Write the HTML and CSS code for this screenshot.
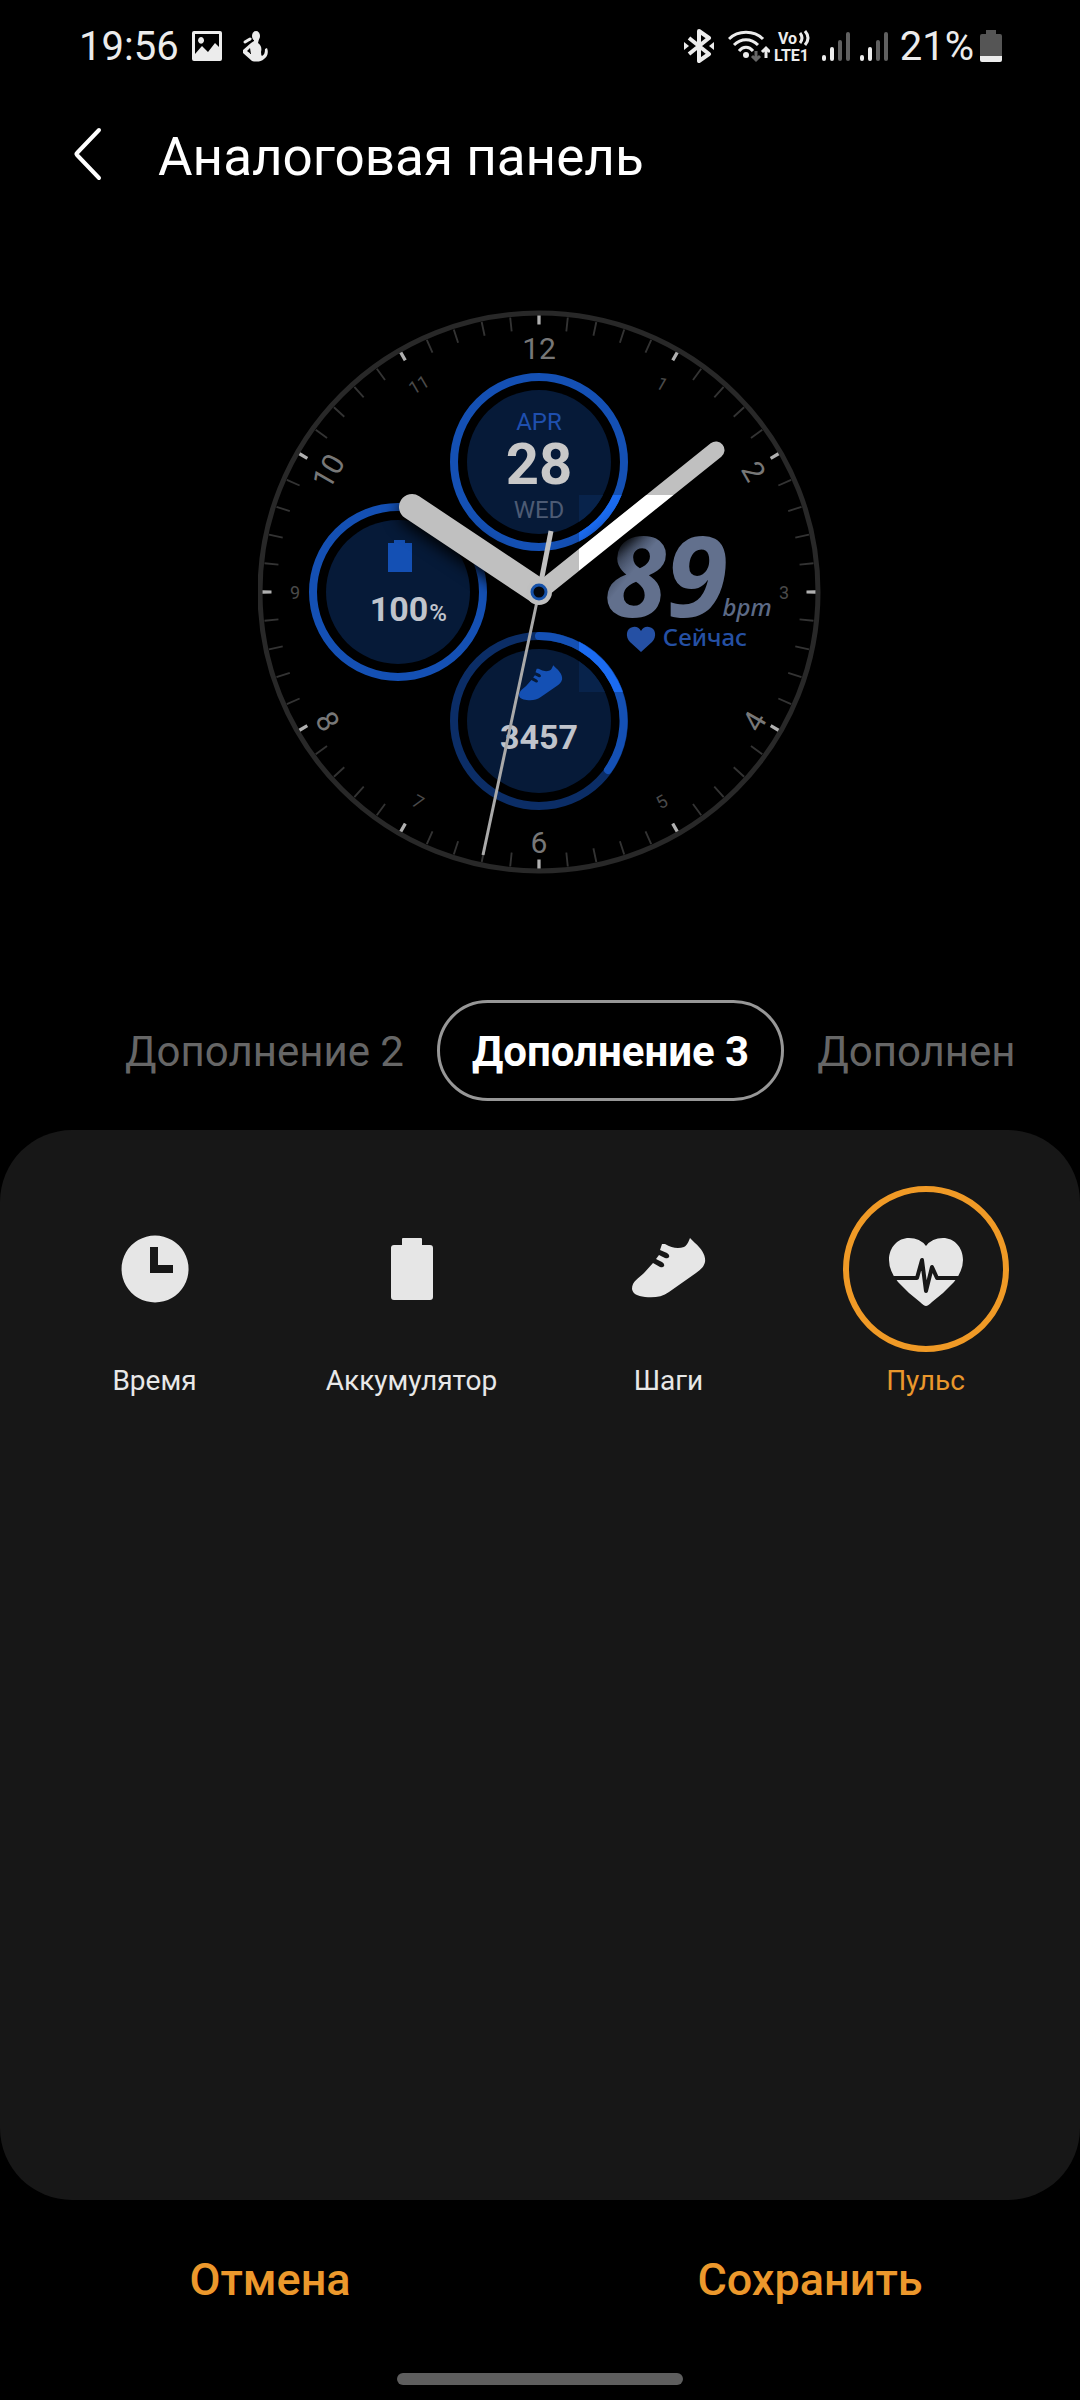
FILE: index.html
```html
<!DOCTYPE html>
<html lang="ru">
<head>
<meta charset="utf-8">
<meta name="viewport" content="width=device-width, initial-scale=1">
<title>Аналоговая панель</title>
<link rel="stylesheet" href="styles.css">
</head>
<body>
<div class="status">
  <div class="status-left">
    <span class="status-text">19:56</span>
    <svg class="icon-photo" width="32" height="32" viewBox="0 0 32 32" aria-hidden="true">
      <path fill="#ececec" fill-rule="evenodd" d="M3 1h26a2 2 0 0 1 2 2v26a2 2 0 0 1-2 2H3a2 2 0 0 1-2-2V3a2 2 0 0 1 2-2zM4 4v20l7-8 6 6 7-9 4 4V4zM10 7a3 3.400 0 1 0 .1 0z"/>
    </svg>
    <svg class="icon-person" width="28" height="32" viewBox="0 0 28 32" aria-hidden="true">
      <ellipse cx="15" cy="6" rx="4" ry="5" fill="#ececec"/>
      <path fill="#ececec" fill-rule="evenodd" d="M13 9h5l-1 4c3 2 4 5 3 9q0 3 1 4c2-1 3-3 3-7l2-1c2 5 0 9-3 11-3 3-8 3-12 2L2 23v-3l8-7 3-2zM6 21l4 3-1-6z"/>
      <path fill="none" stroke="#ececec" stroke-width="3" stroke-linecap="round" d="M4 12l5-3"/>
    </svg>
  </div>
  <div class="status-right">
    <svg width="30" height="34" viewBox="0 0 30 34" fill="none" stroke="#ececec" stroke-width="4" stroke-linejoin="round" aria-hidden="true">
      <path d="M5 9l20 16-10 7V2l10 7L5 25"/>
      <path fill="#ececec" stroke="none" d="M0 13l5 4-5 4zM30 13l-5 4 5 4z"/>
    </svg>
    <svg class="icon-wifi" width="42" height="34" viewBox="0 0 42 34" fill="none" stroke="#ececec" stroke-width="3" aria-hidden="true">
      <path d="M1 10C10 1 26 1 35 10M6 16C13 9 23 9 30 16M11 22c4-5 10-5 14 0"/>
      <circle cx="18" cy="26" r="3" fill="#ececec" stroke="none"/>
      <path stroke="#666" d="M28 22v9M24 27l4 4 4-4"/>
      <path d="M38 29v-9M34 23l4-4 4 4"/>
    </svg>
    <svg class="icon-lte" width="42" height="34" viewBox="0 0 42 34" aria-label="VoLTE">
      <text x="4" y="15" class="net-text">Vo</text>
      <path fill="none" stroke="#ececec" stroke-width="3" d="M26 4q4 5 0 10M31 2q6 7 0 14"/>
      <text x="0" y="32" class="net-text">LTE1</text>
    </svg>
    <svg class="icon-signal" width="28" height="34" viewBox="0 0 28 34" stroke-width="4" stroke-linecap="round" aria-hidden="true">
      <path stroke="#ececec" d="M2 28v2M10 20v10"/><path stroke="#606060" d="M18 13v17M26 5v25"/>
    </svg>
    <svg class="icon-signal second" width="28" height="34" viewBox="0 0 28 34" stroke-width="4" stroke-linecap="round" aria-hidden="true">
      <path stroke="#ececec" d="M2 28v2M10 20v10"/><path stroke="#606060" d="M18 13v17M26 5v25"/>
    </svg>
    <span class="status-text percent">21%</span>
    <svg width="22" height="34" viewBox="0 0 22 34" aria-hidden="true">
      <path fill="#555" d="M6 1h10v4h4q2 0 2 2v20H0V7q0-2 2-2h4z"/>
      <path fill="#ececec" d="M0 27h22v4q0 2-2 2H2q-2 0-2-2z"/>
    </svg>
  </div>
</div>

<header class="header">
  <button class="back" type="button" aria-label="Назад">
    <svg width="32" height="54" viewBox="0 0 32 54" fill="none" stroke="#fff" stroke-width="4" stroke-linecap="round" stroke-linejoin="round"><path d="M26 3L4 26q-1 1 0 2l22 23"/></svg>
  </button>
  <h1 class="title">Аналоговая панель</h1>
</header>

<main class="main">
  <svg class="watch" viewBox="-281 -282 564 564" role="img" aria-label="Циферблат">
    <defs>
      <clipPath id="slot"><rect x="40" y="-97" width="190" height="197"/></clipPath>
      <linearGradient id="digits" x1="0" y1="0" x2="1" y2="1">
        <stop offset="0.2" stop-color="#2c3546"/><stop offset="0.36" stop-color="#62708d"/>
      </linearGradient>
      <path id="shoe" d="M0 48C0 40 7 37 12 32L21 22l7 4q3 1 4-1t-2-4l-6-3 3-4 6 3q3 1 4-1t-2-4l-7-3 2-6h3q10 6 19 3 3-1 6-9l5 5c7 6 11 13 10 19-1 5-5 8-9 11L37 51c-7 5-15 6-24 5-8-1-12-3-13-8z"/>
    </defs>
    <circle r="279" fill="none" stroke="#282828" stroke-width="5"/>
    <circle class="ticks-minor" r="269" pathLength="360"/>
    <circle class="ticks-major" r="272" pathLength="360"/>

    <g class="num-big">
      <text y="-233">12</text>
      <text y="261">6</text>
      <text transform="translate(215 -121) rotate(60)" y="11">2</text>
      <text transform="translate(215 129) rotate(-60)" y="11">4</text>
      <text transform="translate(-211 129) rotate(60)" y="11">8</text>
      <text transform="translate(-211 -121) rotate(-60)" y="11">10</text>
    </g>
    <g class="num-small">
      <text transform="translate(123 -208) rotate(30)" y="6">1</text>
      <text x="245" y="7">3</text>
      <text transform="translate(123 210) rotate(-30)" y="6">5</text>
      <text transform="translate(-121 210) rotate(30)" y="6">7</text>
      <text x="-244" y="7">9</text>
      <text transform="translate(-120 -207) rotate(-30)" y="6">11</text>
    </g>

    <g class="pulse">
      <text class="pulse-value" x="127" y="25">89</text>
      <text class="pulse-unit" x="208" y="24">bpm</text>
      <path fill="#2550a4" d="M102 60L91 50c-5-5-4-14 3-15q5-1 8 4 3-5 8-4c7 1 8 10 3 15z"/>
      <text class="pulse-when" x="166" y="54">Сейчас</text>
    </g>

    <g id="face">
      <circle class="ring" cy="-130" r="85"/><circle class="disc" cy="-130" r="72"/>
      <circle class="ring" cx="-141" r="85"/><circle class="disc" cx="-141" r="72"/>
      <circle class="ring ring-dark" cy="129" r="85"/><circle class="disc" cy="129" r="72"/>
      <path class="ring" stroke-linecap="round" d="M0 44A85 85 0 0 1 69 178"/>
      <use href="#shoe" fill="#1450b4" transform="translate(-20 75) scale(.59)"/>
      <path fill="#1450b4" d="M-145-52h11v3h7v29h-24v-29h6z"/>
      <g class="hands">
        <path stroke="#c0c0c0" stroke-width="26" stroke-linecap="round" d="M-1-1L-127-85"/>
        <path stroke="#c0c0c0" stroke-width="17" stroke-linecap="round" d="M0 0L177-142"/>
      </g>
    </g>
    <g clip-path="url(#slot)"><use href="#face" class="bright"/></g>

    <g class="dial-text">
      <text class="month" y="-162">APR</text>
      <text class="day" y="-108">28</text>
      <text class="weekday" y="-74">WED</text>
      <text class="value" x="-140" y="29">100</text>
      <text class="unit" x="-101" y="29">%</text>
      <text class="value" y="157">3457</text>
    </g>
    <path stroke="#aaa" stroke-width="3" d="M-56 263L0 0"/>
    <path stroke="#c0c0c0" stroke-width="5" d="M0 0L12-61"/>
    <circle r="13" fill="#bfbfbf"/>
    <circle r="7" fill="#03060c" stroke="#1450a8" stroke-width="3"/>
  </svg>

  <div class="tabs" role="tablist">
    <button class="tab" type="button" role="tab" aria-selected="false">Дополнение 2</button>
    <button class="tab tab-active" type="button" role="tab" aria-selected="true">Дополнение 3</button>
    <button class="tab" type="button" role="tab" aria-selected="false">Дополнение 4</button>
  </div>

  <section class="panel">
    <div class="options">
      <label class="option">
        <input type="radio" name="complication">
        <span class="option-icon"><svg width="80" height="80" viewBox="0 0 80 80"><path fill="#e6e6e6" fill-rule="evenodd" d="M40 6.500a33.500 33.500 0 1 0 .1 0zM35 18h8v18h15v8H35z"/></svg></span>
        <span>Время</span>
      </label>
      <label class="option">
        <input type="radio" name="complication">
        <span class="option-icon"><svg width="80" height="80" viewBox="0 0 80 80"><path fill="#e6e6e6" d="M31 9h18q1 0 1 1v6h8q3 0 3 3v49q0 3-3 3H22q-3 0-3-3V19q0-3 3-3h8v-6q0-1 1-1z"/></svg></span>
        <span>Аккумулятор</span>
      </label>
      <label class="option">
        <input type="radio" name="complication">
        <span class="option-icon"><svg width="80" height="80" viewBox="0 0 80 80"><use href="#shoe" fill="#e6e6e6" x="3" y="12"/></svg></span>
        <span>Шаги</span>
      </label>
      <label class="option">
        <input type="radio" name="complication" checked>
        <span class="option-icon"><svg width="80" height="80" viewBox="0 0 80 80">
          <path fill="#e6e6e6" d="M40 77Q38 77 34 73 22 64 12 53 3 42 3 31C3 18 12 9 23 9q11 0 17 8 6-8 17-8c11 0 20 9 20 22q0 11-9 22-10 11-22 20-4 4-6 4z"/>
          <path fill="none" stroke="#171717" stroke-width="4" stroke-linejoin="round" d="M5 49h26l5-18 4 31 6-24 5 11h24"/>
        </svg></span>
        <span>Пульс</span>
      </label>
    </div>
  </section>
</main>

<footer class="actions">
  <button class="action" type="button">Отмена</button>
  <button class="action" type="button">Сохранить</button>
</footer>
<div class="gesture"></div>
</body>
</html>
```
FILE: styles.css
```css
* { box-sizing: border-box; }

body {
  margin: 0;
  min-height: 100vh;
  display: flex;
  flex-direction: column;
  background: #000;
  color: #fff;
  font-family: Roboto, sans-serif;
}

button {
  margin: 0;
  padding: 0;
  border: 0;
  background: none;
  color: inherit;
  font: inherit;
  cursor: pointer;
}

svg { display: block; flex: none; }

/* Status bar */
.status {
  display: flex;
  justify-content: space-between;
  align-items: center;
  height: 92px;
  padding: 0 78px 0 79px;
  color: #ececec;
}
.status-left, .status-right { display: flex; align-items: center; }
.status-text { padding-top: 2px; font-size: 40px; line-height: 48px; }
.icon-photo { margin-left: 12px; }
.icon-person { margin-left: 18px; }
.icon-wifi { margin-left: 14px; }
.icon-lte { margin-left: 4px; }
.icon-signal { margin-left: 6px; }
.icon-signal.second { margin-left: 10px; }
.percent { margin: 0 6px 0 12px; }
.net-text { font: 700 16px Roboto, sans-serif; fill: #ececec; }

/* Header */
.header {
  display: flex;
  align-items: center;
  height: 124px;
  padding: 0 73px;
  gap: 53px;
}
.title {
  margin: 0;
  padding-top: 6px;
  font-size: 53px;
  line-height: 64px;
  font-weight: 400;
}

.main { flex: 1; display: flex; flex-direction: column; }

/* Watch face */
.watch {
  width: 564px;
  max-width: 100%;
  margin: 94px auto 126px;
}
.watch text { text-anchor: middle; }
.ticks-minor, .ticks-major { fill: none; }
.ticks-minor {
  stroke: #333;
  stroke-width: 14;
  stroke-dasharray: 0 6 0.4 5.6 0.4 5.6 0.4 5.6 0.4 5.6;
  stroke-dashoffset: 0.2;
}
.ticks-major {
  stroke: #b0b0b0;
  stroke-width: 9;
  stroke-dasharray: 0.7 29.3;
  stroke-dashoffset: 0.35;
}
.num-big { font: 400 30px Roboto, sans-serif; fill: #777; }
.num-small { font: 400 18px Roboto, sans-serif; fill: #4a4a4a; }
.ring { fill: none; stroke: #1450b4; stroke-width: 8; }
.ring-dark { stroke: #0b2d66; }
.disc { fill: #061a38; }
.hands { filter: drop-shadow(0 6px 8px #000); }
.bright { filter: brightness(1.34); }
.month, .weekday { font: 400 24px Roboto, sans-serif; }
.month { fill: #1f4fae; }
.weekday { fill: #4d5b74; }
.day { font: 700 58px Roboto, sans-serif; fill: #c8c8c8; }
.value { font: 700 34px Roboto, sans-serif; fill: #c0c4cc; }
.unit { font: 500 24px Roboto, sans-serif; fill: #c0c4cc; }
.pulse-value { font: italic 700 112px "Noto Sans", sans-serif; fill: url(#digits); }
.pulse-unit { font: italic 500 24px "Noto Sans", sans-serif; fill: #5c6a86; }
.pulse-when { font: 500 24px "Noto Sans", sans-serif; fill: #2550a4; }

/* Complication tabs */
.tabs {
  display: flex;
  margin: 0 65px 29px 92px;
  overflow: hidden;
}
.tab {
  flex: none;
  height: 101px;
  padding: 3px 30px 0;
  border: 3px solid transparent;
  border-radius: 51px;
  font-size: 42px;
  line-height: 50px;
  color: #666;
  white-space: nowrap;
}
.tab-active {
  padding: 3px 32px 0;
  border-color: #979797;
  color: #fff;
  font-weight: 700;
}

/* Options panel */
.panel {
  flex: 1;
  padding: 56px 26px;
  border-radius: 72px;
  background: #171717;
}
.options { display: grid; grid-template-columns: repeat(4, 1fr); }
.option {
  display: flex;
  flex-direction: column;
  align-items: center;
  gap: 13px;
  font-size: 28px;
  line-height: 32px;
  color: #e8e8e8;
}
.option input { position: absolute; opacity: 0; }
.option-icon {
  display: flex;
  align-items: center;
  justify-content: center;
  width: 166px;
  height: 166px;
  border: 6px solid transparent;
  border-radius: 50%;
}
.option input:checked ~ .option-icon { border-color: #f09a26; }
.option:has(input:checked) { color: #ea972c; }

/* Bottom actions */
.actions { display: flex; height: 156px; }
.action {
  flex: 1;
  padding-top: 3px;
  font-size: 45px;
  line-height: 56px;
  font-weight: 500;
  color: #ec982c;
}
.gesture {
  width: 286px;
  height: 12px;
  margin: 17px auto 15px;
  border-radius: 6px;
  background: #5e5e5e;
}
```
